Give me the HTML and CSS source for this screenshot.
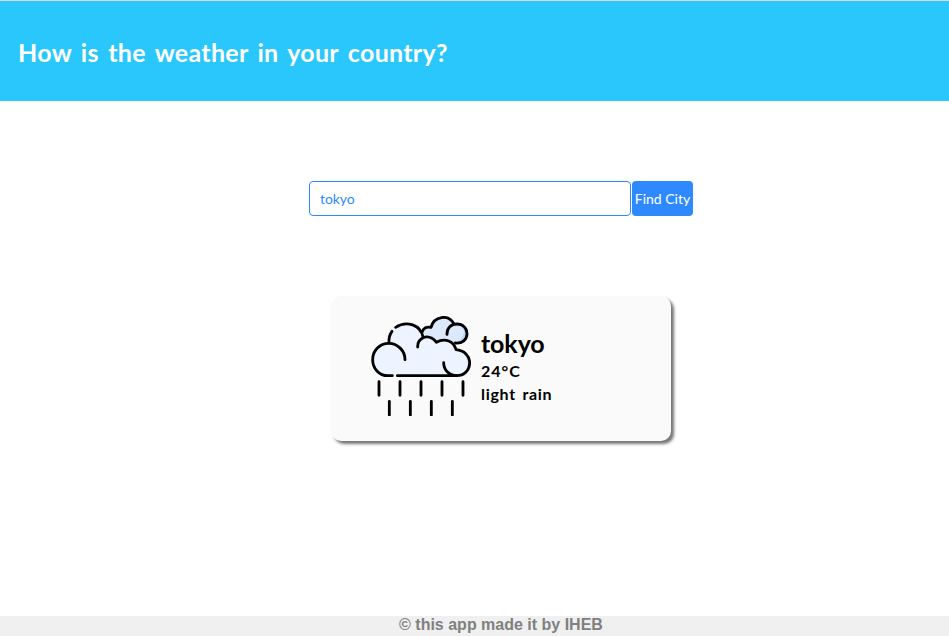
FILE: index.html
```html
<!DOCTYPE html>
<html lang="en">
<head>
<meta charset="utf-8">
<title>Weather</title>
<link rel="stylesheet" href="styles.css">
</head>
<body>
<header class="header"><h1 class="title">How is the weather in your country?</h1></header>
<main class="main">
<form class="search">
<input class="city-input" type="text" value="tokyo" aria-label="City">
<button class="find" type="button"><span>Find City</span></button>
</form>
<section class="card">
<svg class="icon" viewBox="33 33 300 300" fill="none" stroke="#000" stroke-width="8.5" stroke-linecap="round" stroke-linejoin="round">
<path d="M187 80C190 70 200 64 213 67C221 30 266 25 282 58C310 50 325 72 320 92C316 111 300 117 286 114L230 120Z" fill="#dce9fd" stroke="none"/>
<path d="M307 60C321 73 320 103 298 112L286 114C310 105 318 80 307 60Z" fill="#b9d6fb" stroke="none"/>
<path d="M87 114C82 70 108 56 139 57C165 58 183 72 188 96C207 91 222 99 229 112C254 98 282 109 288 134C314 136 329 153 329 174C328 198 313 212 290 212H84C57 212 38 190 38 164C38 135 60 116 87 114Z" fill="#edf4ff" stroke="none"/>
<path d="M305 140C327 158 331 191 300 211C332 207 338 153 305 140Z" fill="#cfe2fc" stroke="none"/>
<path d="M97 212H84C57 212 38 190 38 164C38 136 60 115 86 115C113 115 135 137 135 164"/>
<path d="M87 113C86 99 89 88 96 79M107 67C140 45 182 60 189 96"/>
<path d="M173 126C172 101 197 89 216 100Q224 104 229 112C255 97 282 109 288 134C313 136 329 153 329 174C328 197 312 212 290 212H112"/>
<path d="M251 173C251 194 267 212 290 212"/>
<path d="M187 80C190 70 200 64 213 67C222 32 266 27 282 57M261 88C260 69 274 57 291 57C308 57 321 69 321 86C321 104 307 116 286 114"/>
<path d="M57 230V271M120 230V271M183 230V271M246 230V271M309 230V271M88 289V330M151 289V330M214 289V330M277 289V330"/>
</svg>
<div class="details">
<h2 class="city">tokyo</h2>
<p class="temp">24°C</p>
<p class="sky">light rain</p>
</div>
</section>
</main>
<footer class="footer">© this app made it by IHEB</footer>
</body>
</html>
```
FILE: styles.css
```css
* { box-sizing: border-box; }
body {
  margin: 0;
  height: 636px;
  display: flex;
  flex-direction: column;
  overflow: hidden;
  background: #fff;
  font-family: "Comic Sans MS", Lato, sans-serif;
}
h1, h2, p { margin: 0; white-space: nowrap; }
.header {
  height: 101px;
  flex: none;
  border-top: 1px solid #d6dadc;
  background: #29c7fb;
  padding: 33px 18px 0;
}
.title {
  color: #fff;
  font-size: 25px;
  line-height: 36px;
  letter-spacing: 0.3px;
  word-spacing: 3px;
}
.main {
  flex: 1;
  display: flex;
  flex-direction: column;
  align-items: center;
  padding: 80px 0 0 53px;
}
.search { display: flex; gap: 1px; }
.city-input {
  width: 322px;
  height: 35px;
  border: 1px solid #2e89ff;
  border-radius: 4px;
  padding: 0 10px;
  color: #2e89ff;
  background: #fff;
  font: 14px "Comic Sans MS", Lato, sans-serif;
  letter-spacing: -0.1px;
}
.find {
  width: 61px;
  height: 35px;
  border: 0;
  border-radius: 4px;
  padding: 0;
  color: #fff;
  background: #2e89ff;
  font: 14px "Comic Sans MS", Lato, sans-serif;
  white-space: nowrap;
}
.card {
  width: 340px;
  height: 145px;
  margin-top: 80px;
  padding: 20px 40px;
  display: flex;
  gap: 10px;
  border-radius: 10px;
  background: #fafafa;
  box-shadow: 3px 3px 3px #777;
}
.icon { width: 100px; height: 100px; flex: none; }
.details { padding-top: 10px; font-weight: 700; }
.city { font-size: 25px; line-height: 33px; letter-spacing: -0.1px; padding-top: 1px; margin-bottom: -1px; }
.temp, .sky { font-size: 16px; line-height: 23px; }
.temp { letter-spacing: 1px; }
.sky { letter-spacing: 0.7px; word-spacing: 2px; }
.footer {
  height: 20px;
  flex: none;
  padding-left: 53px;
  background: #f0f0f0;
  color: #808080;
  text-align: center;
  font: 700 16px/18px "Liberation Sans", Arial, sans-serif;
}
```
